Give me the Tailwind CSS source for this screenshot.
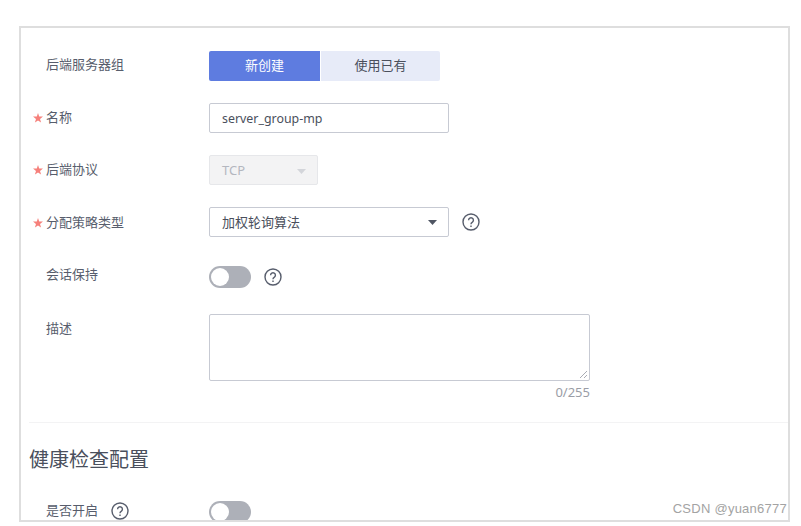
<!DOCTYPE html>
<html lang="zh-CN">
<head>
  <meta charset="UTF-8">
  <title>后端服务器组</title>
  <script src="https://cdn.jsdelivr.net/npm/@tailwindcss/browser@4"></script>
</head>
<body class="bg-white h-[526px] overflow-hidden font-['Noto_Sans','Noto_Sans_CJK_SC',sans-serif] text-[13px] text-[#575d6c]">

  <div class="ml-[19px] mt-[26px] w-[771px] h-[496px] border-2 border-[#dedede] overflow-hidden relative">
    <div class="pt-[23px]">

      <!-- 后端服务器组 -->
      <div class="flex h-[30px] items-center">
        <div class="w-[188px] pl-[25px] shrink-0 -mt-[2px]">后端服务器组</div>
        <button class="w-[111px] h-[30px] bg-[#5e7ce0] text-white rounded-l-[2px]">新创建</button>
        <button class="w-[119px] h-[30px] ml-[1px] bg-[#e7ebf8] text-[#4a4f5c] rounded-r-[2px]">使用已有</button>
      </div>

      <!-- 名称 -->
      <div class="flex h-[30px] items-center mt-[22px]">
        <div class="w-[188px] pl-[12px] shrink-0 flex items-center">
          <svg class="mr-[3px]" width="10" height="10" viewBox="0 0 10 10"><path d="M5 0l1.2 3.6H10L7 5.9 8.1 9.6 5 7.4 1.9 9.6 3 5.9 0 3.6h3.8z" fill="#f6807b"/></svg>名称</div>
        <div class="w-[240px] h-[30px] border border-[#c7cad3] rounded-[2px] flex items-center pl-[12px] pt-[2px] text-[12.4px] text-[#4a4f5c]">server_group-mp</div>
      </div>

      <!-- 后端协议 -->
      <div class="flex h-[30px] items-center mt-[22px]">
        <div class="w-[188px] pl-[12px] shrink-0 flex items-center">
          <svg class="mr-[3px]" width="10" height="10" viewBox="0 0 10 10"><path d="M5 0l1.2 3.6H10L7 5.9 8.1 9.6 5 7.4 1.9 9.6 3 5.9 0 3.6h3.8z" fill="#f6807b"/></svg>后端协议</div>
        <div class="w-[109px] h-[30px] border border-[#e6e7ea] bg-[#f3f3f4] rounded-[2px] flex items-center justify-between pl-[12px] pr-[11px] pt-[2px] text-[#b4b7bf]">
          <span>TCP</span>
          <svg width="9" height="5" viewBox="0 0 9 5"><path d="M0 0h9L4.5 5z" fill="#d3d5da"/></svg>
        </div>
      </div>

      <!-- 分配策略类型 -->
      <div class="flex h-[30px] items-center mt-[22px]">
        <div class="w-[188px] pl-[12px] shrink-0 flex items-center pt-[1px]">
          <svg class="mr-[3px]" width="10" height="10" viewBox="0 0 10 10"><path d="M5 0l1.2 3.6H10L7 5.9 8.1 9.6 5 7.4 1.9 9.6 3 5.9 0 3.6h3.8z" fill="#f6807b"/></svg>分配策略类型</div>
        <div class="w-[240px] h-[30px] border border-[#c7cad3] rounded-[2px] flex items-center justify-between pl-[12px] pr-[11px] pt-[1px] text-[#4a4f5c]">
          <span>加权轮询算法</span>
          <svg width="9" height="5" viewBox="0 0 9 5"><path d="M0 0h9L4.5 5z" fill="#4f5563"/></svg>
        </div>
        <svg class="ml-[13px]" width="18" height="18" viewBox="0 0 18 18" fill="none" stroke="#575d6c" stroke-width="1.4"><circle cx="9" cy="9" r="8"/><path d="M6.6 7.2a2.4 2.4 0 1 1 3.6 2.1c-.8.5-1.2.9-1.2 1.9"/><path d="M9 12.6v1.3"/></svg>
      </div>

      <!-- 会话保持 -->
      <div class="flex h-[22px] items-center mt-[29px]">
        <div class="w-[188px] pl-[25px] shrink-0 -mt-[4px]">会话保持</div>
        <div class="w-[42px] h-[22px] rounded-full bg-[#adb0b8] p-[2px]"><div class="w-[18px] h-[18px] rounded-full bg-white"></div></div>
        <svg class="ml-[13px]" width="18" height="18" viewBox="0 0 18 18" fill="none" stroke="#575d6c" stroke-width="1.4"><circle cx="9" cy="9" r="8"/><path d="M6.6 7.2a2.4 2.4 0 1 1 3.6 2.1c-.8.5-1.2.9-1.2 1.9"/><path d="M9 12.6v1.3"/></svg>
      </div>

      <!-- 描述 -->
      <div class="flex mt-[26px]">
        <div class="w-[188px] pl-[25px] shrink-0 pt-[5px]">描述</div>
        <div class="w-[381px]">
          <div class="h-[67px] border border-[#c7cad3] rounded-[2px] relative">
            <svg class="absolute right-[1px] bottom-[1px]" width="9" height="9" viewBox="0 0 9 9" stroke="#a9acb4" fill="none"><path d="M1 8l7-7M5 8l3-3"/></svg>
          </div>
          <div class="text-right text-[#9a9da6] mt-[2px] leading-[18px]">0/255</div>
        </div>
      </div>

      <div class="ml-[8px] mt-[21px] border-t border-[#f3f3f4]"></div>

      <h2 class="pl-[8px] mt-[23px] text-[20px] leading-[28px] text-[#4a4f5c]">健康检查配置</h2>

      <!-- 是否开启 -->
      <div class="flex h-[22px] items-center mt-[27px]">
        <div class="w-[188px] pl-[25px] shrink-0 flex items-center gap-[13px] -mt-[3px]">是否开启
          <svg width="18" height="18" viewBox="0 0 18 18" fill="none" stroke="#575d6c" stroke-width="1.4"><circle cx="9" cy="9" r="8"/><path d="M6.6 7.2a2.4 2.4 0 1 1 3.6 2.1c-.8.5-1.2.9-1.2 1.9"/><path d="M9 12.6v1.3"/></svg>
        </div>
        <div class="w-[42px] h-[22px] rounded-full bg-[#adb0b8] p-[2px]"><div class="w-[18px] h-[18px] rounded-full bg-white"></div></div>
      </div>
    </div>

    <!-- 水印 -->
    <div class="absolute right-[1px] bottom-[2px] font-['Liberation_Sans',sans-serif] text-[13px] tracking-[0.25px] text-[#a3a3a3]">CSDN @yuan6777</div>
  </div>

</body>
</html>
